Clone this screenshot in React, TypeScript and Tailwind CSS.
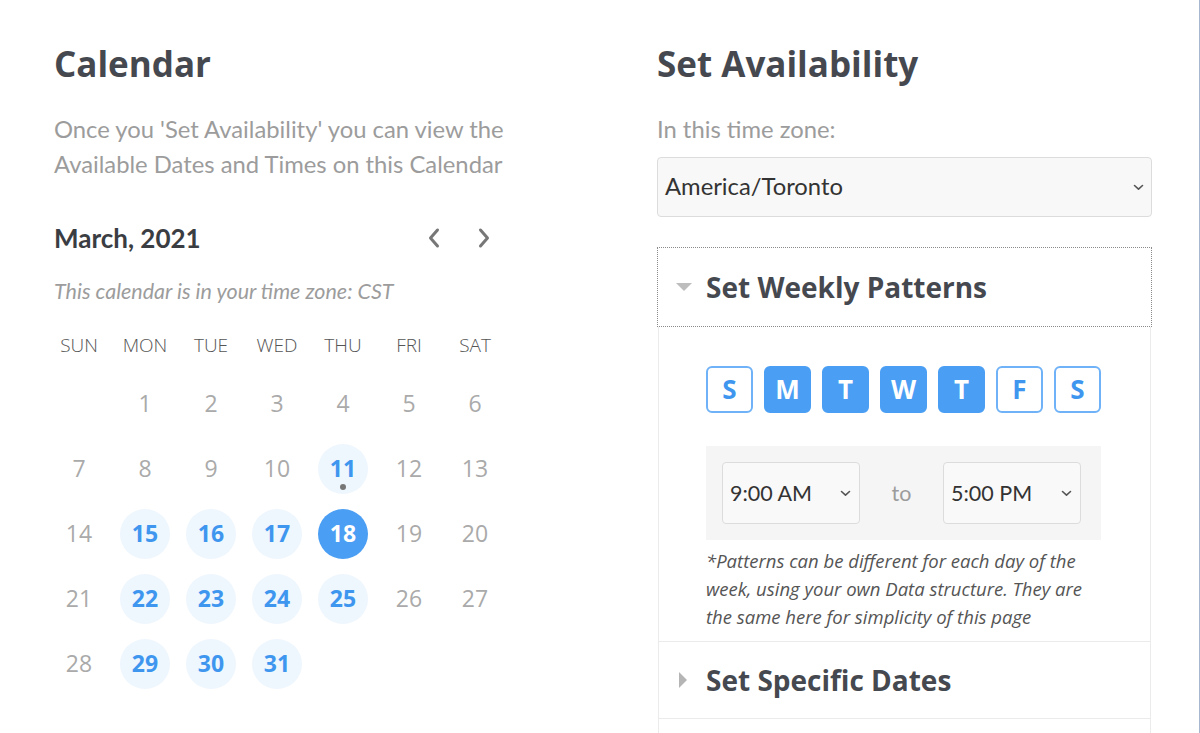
import React from "react";

type Cell = number | null;

const rows: Cell[][] = [
  [null, 1, 2, 3, 4, 5, 6],
  [7, 8, 9, 10, 11, 12, 13],
  [14, 15, 16, 17, 18, 19, 20],
  [21, 22, 23, 24, 25, 26, 27],
  [28, 29, 30, 31, null, null, null],
];

const available = new Set([11, 15, 16, 17, 22, 23, 24, 25, 29, 30, 31]);
const weekdays = ["SUN", "MON", "TUE", "WED", "THU", "FRI", "SAT"];
const dayButtons: { l: string; on: boolean }[] = [
  { l: "S", on: false },
  { l: "M", on: true },
  { l: "T", on: true },
  { l: "W", on: true },
  { l: "T", on: true },
  { l: "F", on: false },
  { l: "S", on: false },
];

function SmallChevron() {
  return (
    <svg width="11" height="7" viewBox="0 0 11 7" className="shrink-0">
      <path d="M1.5 1.5 L5.5 5.2 L9.5 1.5" fill="none" stroke="#555" strokeWidth="1.6" strokeLinecap="round" strokeLinejoin="round" />
    </svg>
  );
}

function DayCell({ d }: { d: Cell }) {
  if (d === null) return <div className="h-[65px]" />;
  const sel = d === 18;
  const av = available.has(d);
  return (
    <div className="h-[65px] flex items-center justify-center">
      {sel ? (
        <div className="w-[50px] h-[50px] rounded-full bg-[#4a9ef3] flex items-center justify-center text-white font-bold text-[23px]">
          {d}
        </div>
      ) : av ? (
        <div className="relative w-[50px] h-[50px] rounded-full bg-[#eef6fe] flex items-center justify-center text-[#3f96ef] font-bold text-[23px]">
          {d}
          {d === 11 && <span className="absolute bottom-[4px] left-1/2 -translate-x-1/2 w-[6px] h-[6px] rounded-full bg-[#777]" />}
        </div>
      ) : (
        <span className="text-[#aaaaaa] text-[23px]">{d}</span>
      )}
    </div>
  );
}

export default function App() {
  return (
    <div className="h-[733px] w-full overflow-hidden bg-white border-r border-[#a9b6cf] font-['Open_Sans',sans-serif]">
      <div className="flex pl-[54px] pt-[42px]">
        {/* Left column */}
        <div className="w-[456px] shrink-0">
          <h1 className="text-[35px] leading-[44px] font-bold text-[#45494f]">Calendar</h1>
          <p className="mt-[26px] text-[23.8px] leading-[35px] text-[#9c9c9c] font-['Lato',sans-serif] whitespace-nowrap">
            Once you 'Set Availability' you can view the
            <br />
            Available Dates and Times on this Calendar
          </p>
          <div className="mt-[40px] flex items-center justify-between h-[32px]">
            <span className="text-[26px] font-bold text-[#3a3d42] font-['Lato',sans-serif]">March, 2021</span>
            <div className="flex items-center gap-[38px] pr-[20px]">
              <svg width="12" height="22" viewBox="0 0 12 22">
                <path d="M9.5 3 L2.5 11 L9.5 19" fill="none" stroke="#777" strokeWidth="3" strokeLinecap="round" strokeLinejoin="round" />
              </svg>
              <svg width="12" height="22" viewBox="0 0 12 22">
                <path d="M2.5 3 L9.5 11 L2.5 19" fill="none" stroke="#777" strokeWidth="3" strokeLinecap="round" strokeLinejoin="round" />
              </svg>
            </div>
          </div>
          <p className="mt-[23px] text-[21.5px] leading-[28px] italic text-[#9c9c9c] font-['Lato',sans-serif]">
            This calendar is in your time zone: CST
          </p>
          <div className="ml-[-8px] w-[462px]">
            <div className="mt-[26px] grid grid-cols-7 h-[28px] items-center">
              {weekdays.map((w) => (
                <div key={w} className="text-center text-[19px] font-light text-[#555]">
                  {w}
                </div>
              ))}
            </div>
            <div className="mt-[12px] grid grid-cols-7">
              {rows.flat().map((d, i) => (
                <DayCell key={i} d={d} />
              ))}
            </div>
          </div>
        </div>

        {/* Right column */}
        <div className="ml-[147px] w-[495px] shrink-0">
          <h1 className="text-[35px] leading-[44px] font-bold text-[#45494f]">Set Availability</h1>
          <p className="mt-[26px] text-[23.8px] leading-[35px] text-[#9c9c9c] font-['Lato',sans-serif]">In this time zone:</p>
          <div className="mt-[10px] h-[60px] border border-[#dcdcdc] rounded-[4px] bg-[#f8f8f8] flex items-center justify-between pl-[7px] pr-[7px]">
            <span className="text-[23.8px] text-[#333] font-['Lato',sans-serif]">America/Toronto</span>
            <SmallChevron />
          </div>

          <div className="mt-[30px]">
            <div className="h-[80px] border border-dotted border-[#8a8a8a] flex items-center">
              <div className="w-[48px] flex justify-center pl-[3px]">
                <svg width="16" height="8" viewBox="0 0 16 8">
                  <polygon points="0,0 16,0 8,8" fill="#bdbdbd" />
                </svg>
              </div>
              <span className="text-[28px] font-bold text-[#45494f]">Set Weekly Patterns</span>
            </div>
            <div className="mx-[1px] border-x border-[#ebebeb] pt-[39px] pb-[10px] pl-[47px]">
              <div className="flex gap-[11px]">
                {dayButtons.map((b, i) => (
                  <div
                    key={i}
                    className={
                      b.on
                        ? "w-[47px] h-[47px] rounded-[6px] bg-[#4a9ef3] border-2 border-[#4a9ef3] flex items-center justify-center text-white font-bold text-[26px]"
                        : "w-[47px] h-[47px] rounded-[6px] bg-white border-2 border-[#6fb2f7] flex items-center justify-center text-[#3f96ef] font-bold text-[26px]"
                    }
                  >
                    {b.l}
                  </div>
                ))}
              </div>
              <div className="mt-[33px] w-[395px] h-[94px] bg-[#f5f5f5] flex items-center pl-[16px]">
                <div className="w-[138px] h-[62px] border border-[#dcdcdc] rounded-[4px] bg-[#f9f9f9] flex items-center justify-between pl-[7px] pr-[8px]">
                  <span className="text-[21.5px] text-[#333] font-['Lato',sans-serif]">9:00 AM</span>
                  <SmallChevron />
                </div>
                <div className="w-[83px] text-center text-[21.5px] text-[#9c9c9c] font-['Lato',sans-serif]">to</div>
                <div className="w-[138px] h-[62px] border border-[#dcdcdc] rounded-[4px] bg-[#f9f9f9] flex items-center justify-between pl-[7px] pr-[8px]">
                  <span className="text-[21.5px] text-[#333] font-['Lato',sans-serif]">5:00 PM</span>
                  <SmallChevron />
                </div>
              </div>
              <p className="mt-[7px] w-[395px] text-[18.5px] leading-[28px] italic text-[#555]">
                *Patterns can be different for each day of the week, using your own Data structure. They are the same here for simplicity of this page
              </p>
            </div>
            <div className="mx-[1px] border border-[#ebebeb] h-[78px] flex items-center">
              <div className="w-[47px] flex justify-center pl-[1px]">
                <svg width="8" height="16" viewBox="0 0 8 16">
                  <polygon points="0,0 8,8 0,16" fill="#b5b5b5" />
                </svg>
              </div>
              <span className="text-[28px] font-bold text-[#45494f]">Set Specific Dates</span>
            </div>
            <div className="mx-[1px] border-x border-[#ebebeb] h-[60px]" />
          </div>
        </div>
      </div>
    </div>
  );
}
